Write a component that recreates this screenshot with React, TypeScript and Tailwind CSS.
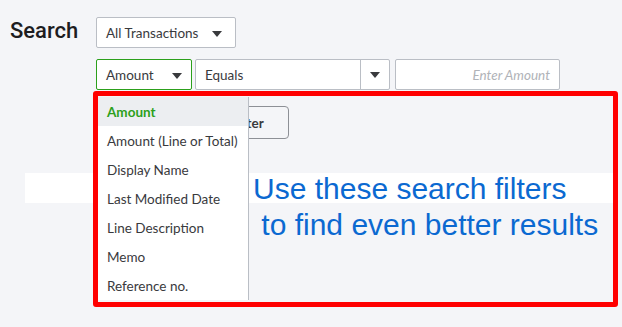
const FIELDS = [
  "Amount",
  "Amount (Line or Total)",
  "Display Name",
  "Last Modified Date",
  "Line Description",
  "Memo",
  "Reference no.",
]

function Caret() {
  return (
    <svg width="10" height="6" viewBox="0 0 10 6" className="shrink-0">
      <path d="M0 0h10L5 6z" fill="#393a3d" />
    </svg>
  )
}

export default function App() {
  return (
    <div className="relative w-[622px] h-[327px] overflow-hidden bg-[#f4f5f8] font-['Lato',sans-serif] text-[#393a3d]">
      {/* Search form */}
      <div className="flex pt-[17px]">
        <div className="w-[96px] pl-[10px] pt-[1px] font-['Roboto',sans-serif] text-[22px] font-medium leading-[26px] text-[#1d1d1f]">
          Search
        </div>
        <div className="flex flex-col">
          <div className="flex h-[31px] w-[140px] items-center justify-between rounded-[2px] border border-[#babec5] bg-white pl-[9px] pr-[13px] pt-[2px] text-[13.5px]">
            <span>All Transactions</span>
            <Caret />
          </div>

          <div className="mt-[11px] flex gap-[3px]">
            <div className="flex h-[31px] w-[96px] items-center justify-between rounded-[2px] border border-[#2ca01c] bg-white pl-[9px] pr-[9px] pt-[2px] text-[13.5px]">
              <span>Amount</span>
              <Caret />
            </div>
            <div className="flex h-[31px] w-[195px] rounded-[2px] border border-[#babec5] bg-white text-[13.5px]">
              <div className="flex flex-1 items-center pl-[9px] pt-[2px]">Equals</div>
              <div className="flex w-[29px] items-center justify-center border-l border-[#babec5]">
                <Caret />
              </div>
            </div>
            <div className="ml-[2px] flex h-[31px] w-[165px] items-center justify-end rounded-[2px] border border-[#babec5] bg-white pr-[9px] pt-[2px] text-[13.5px] italic text-[#b0b3b8]">
              Enter Amount
            </div>
          </div>

          <div className="mt-[16px] flex">
            <button className="ml-[83px] h-[33px] w-[110px] rounded-[4px] border border-[#8d9096] bg-[#f4f5f8] pt-[2px] text-[13.5px] font-bold text-[#393a3d]">
              Add Filter
            </button>
          </div>
        </div>
      </div>

      {/* Results header strip */}
      <div className="ml-[25px] mt-[34px] h-[30px] w-[590px] bg-white" />

      {/* Open field menu */}
      <div className="absolute left-[98px] top-[97px] w-[151px] border-r border-[#babec5] bg-white text-[13.5px]">
        {FIELDS.map((f, i) => (
          <div
            key={f}
            className={
              i === 0
                ? "flex h-[29px] items-center bg-[#eceef1] pl-[9px] pt-[2px] font-bold text-[#2ca01c]"
                : "flex h-[29px] items-center pl-[9px] pt-[2px]"
            }
          >
            {f}
          </div>
        ))}
      </div>

      {/* Annotation */}
      <div className="absolute left-[93px] top-[91px] h-[216px] w-[525px] rounded-[3px] border-[5px] border-[#ff0000]" />
      <div className="absolute left-[253px] top-[171px] whitespace-pre font-['Liberation_Sans',Arial,sans-serif] text-[30px] leading-[36px] text-[#0b69d1]">
        {"Use these search filters\n to find even better results"}
      </div>
    </div>
  )
}
